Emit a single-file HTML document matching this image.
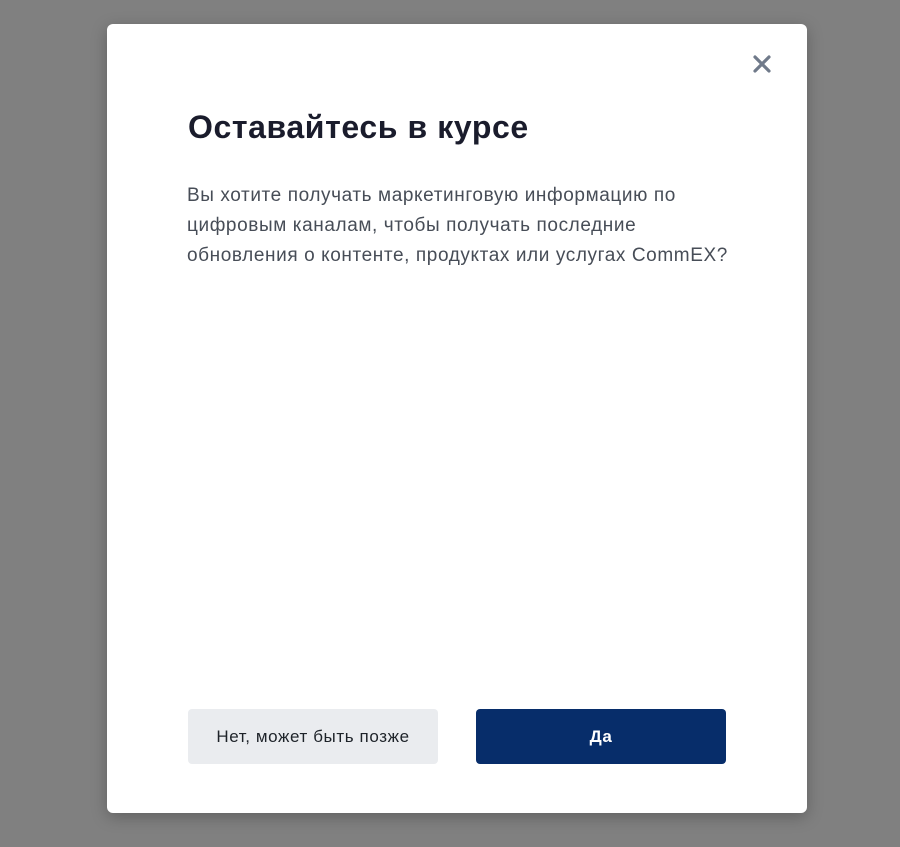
<!DOCTYPE html>
<html><head><meta charset="utf-8"><style>
html,body{margin:0;padding:0;width:900px;height:847px;background:#808080;overflow:hidden;font-family:"Liberation Sans",sans-serif}
.m{position:absolute;left:107px;top:24px;width:700px;height:789px;background:#fff;border-radius:6px;box-shadow:0 4px 16px rgba(0,0,0,.25)}
.x{position:absolute;left:646px;top:31px}
h1{position:absolute;left:81px;top:85px;margin:0;font-size:32px;font-weight:bold;color:#1a1c2c;letter-spacing:0.6px;white-space:nowrap}
p{position:absolute;left:80px;top:157px;margin:0;font-size:19px;line-height:30px;color:#474d57;letter-spacing:0.6px;white-space:nowrap}
.b{position:absolute;top:685px;height:55px;width:250px;border-radius:4px;display:flex;align-items:center;justify-content:center;font-size:17px;letter-spacing:0.6px}
.b1{left:81px;background:#eaecef;color:#1e2329}
.b2{left:369px;background:#072d6a;color:#fff;font-weight:bold}
</style></head><body>
<div class="m">
<svg class="x" width="18" height="18" viewBox="0 0 18 18"><path d="M2 2L16 16M16 2L2 16" stroke="#707a8a" stroke-width="3.2" stroke-linecap="round"/></svg>
<h1>Оставайтесь в курсе</h1>
<p>Вы хотите получать маркетинговую информацию по<br>цифровым каналам, чтобы получать последние<br>обновления о контенте, продуктах или услугах CommEX?</p>
<div class="b b1">Нет, может быть позже</div>
<div class="b b2">Да</div>
</div>
</body></html>
